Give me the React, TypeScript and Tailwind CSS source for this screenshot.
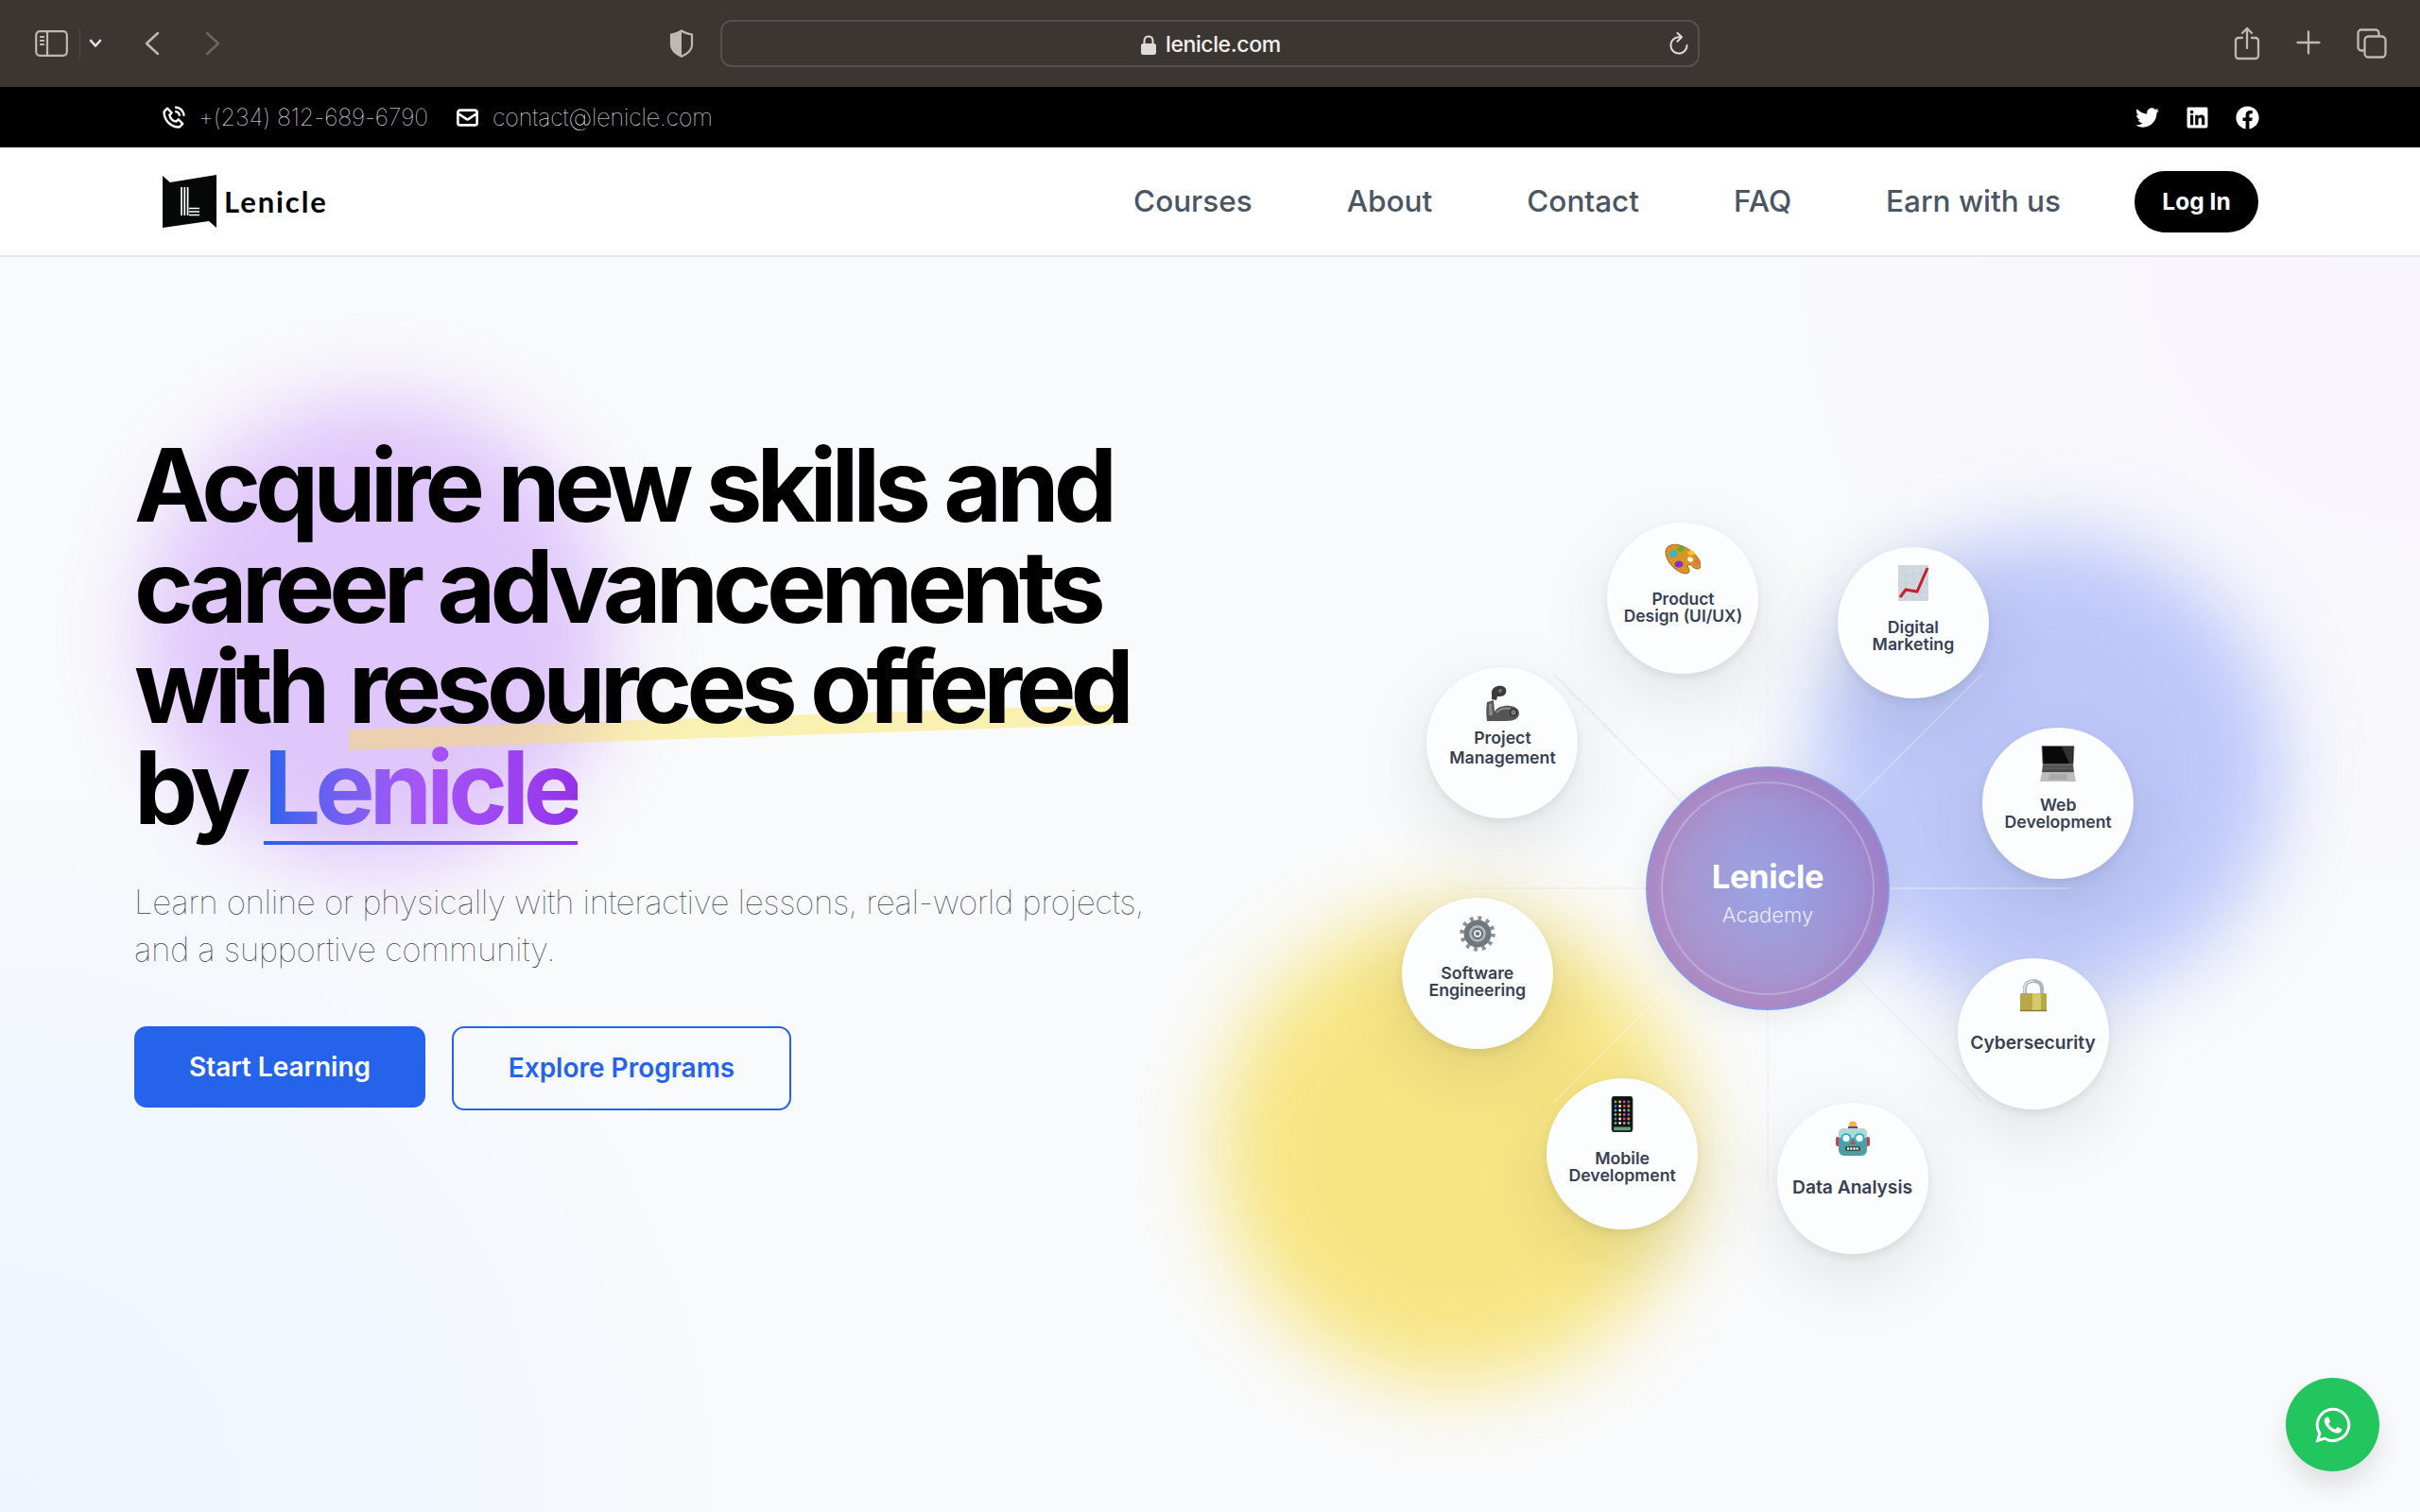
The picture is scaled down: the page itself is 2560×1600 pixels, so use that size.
import type { ReactNode } from "react";
import { BiPhoneCall } from "react-icons/bi";
import { FaFacebook, FaLinkedin, FaTwitter, FaWhatsapp } from "react-icons/fa";
import { HiOutlineMail } from "react-icons/hi";

function Palette() {
  return (
    <svg viewBox="0 0 38 38" className="size-[38px]">
      <path d="M1 12C1 5 10 2 19 6c10 4 18 12 19 19 1 6-5 6-8 3-3-4-7-3-5 1 2 3 1 6-3 6C12 34 1 22 1 12Z" fill="#d99425" stroke="#a5651a" strokeWidth="1" />
      <ellipse cx="27" cy="20" rx="3" ry="2.4" fill="#fff" transform="rotate(25 27 20)" />
      <circle cx="9" cy="14" r="4" fill="#35b5cf" />
      <ellipse cx="17" cy="9" rx="4" ry="2.8" fill="#55b52b" />
      <ellipse cx="28" cy="13" rx="3.6" ry="2.6" fill="#f5c52c" />
      <ellipse cx="34" cy="23" rx="2.6" ry="3.4" fill="#e8743b" />
      <ellipse cx="15" cy="25" rx="4.4" ry="3.6" fill="#8a2cc4" />
    </svg>
  );
}

function Chart() {
  return (
    <svg viewBox="0 0 38 38" className="size-[38px]">
      <rect x="3" y="0" width="32" height="38" fill="#cfd8df" />
      <path d="M3 9.500h32M3 19h32M3 28.500h32M11 0v38M19 0v38M27 0v38" stroke="#c5d0d8" strokeWidth=".8" />
      <path d="M5 34l6-8 12 2L34 3" fill="none" stroke="#c4202f" strokeWidth="3" />
    </svg>
  );
}

function Arm() {
  return (
    <svg viewBox="0 0 38 38" className="size-[38px]">
      <path d="M3 18l7-2 1 12c3-5 10-7 17-6 6 1 9 4 9 8 0 5-5 8-13 8H3c-1-7-1-13 0-20Z" fill="#555" />
      <path d="M8 7c1-5 6-7 11-6 4 1 5 4 4 7-1 4-5 4-9 4l-1 4-5-1V7Z" fill="#3c3c3c" />
      <path d="M5 20l3-1 1 13H5Z" fill="#8a8a8a" />
      <path d="M13 29c4-4 10-5 15-4" fill="none" stroke="#8d8d8d" strokeWidth="2" />
      <circle cx="31" cy="29" r="3.500" fill="#777" stroke="#222" strokeWidth="1.200" />
      <circle cx="17" cy="6" r="2" fill="#777" />
    </svg>
  );
}

function Gear() {
  return (
    <svg viewBox="0 0 38 38" className="size-[38px]">
      <circle cx="19" cy="19" r="16.500" fill="none" stroke="#8b9197" strokeWidth="4.500" strokeDasharray="3.700 4.940" />
      <circle cx="19" cy="19" r="11.500" fill="none" stroke="#71777e" strokeWidth="6" />
      <circle cx="19" cy="19" r="8" fill="#a4abb1" />
      <circle cx="19" cy="19" r="5" fill="#e4e8ea" stroke="#646a71" strokeWidth="1.800" />
      <circle cx="19" cy="19" r="2" fill="#656b72" />
    </svg>
  );
}

function Laptop() {
  return (
    <svg viewBox="0 0 38 38" className="size-[38px]">
      <path d="M2 .500h34l-1 19H3Z" fill="#0a0a0b" stroke="#777" strokeWidth=".8" />
      <path d="M23 1h12l-1 18h-3Z" fill="#333" />
      <path d="M3 19.500h32l1 9H2Z" fill="#4b4b4b" />
      <path d="M3 21h32M3 24h32" stroke="#777" strokeWidth=".8" />
      <path d="M2 28.500h34l2 9.500H0Z" fill="#bdbdbd" />
      <path d="M10 30h18l1 6H9Z" fill="#a8a8a8" />
    </svg>
  );
}

function Padlock() {
  return (
    <svg viewBox="0 0 38 38" className="size-[38px]">
      <path d="M10 20v-7c0-5 4-8 9-8s9 3 9 8v7" fill="none" stroke="#a9b5c0" strokeWidth="4" />
      <path d="M9.500 18v-5c0-5 4-8 9.500-8" fill="none" stroke="#dde6ed" strokeWidth="1.500" />
      <rect x="5" y="18" width="28" height="19" rx="1.500" fill="#b9a844" />
      <rect x="18" y="18" width="9" height="19" fill="#d6c86c" />
      <path d="M5 36.500h28" stroke="#8f7d2b" strokeWidth="1.500" />
    </svg>
  );
}

const appColors = ["#5ac85a", "#f0f0f0", "#d98ca0", "#6b7280", "#3fb6e8", "#eec643", "#e04b4b", "#43c08a", "#3f7fe8", "#f5f5f5", "#b44fd8", "#ef8f35"];

function Phone() {
  return (
    <svg viewBox="0 0 38 38" className="size-[38px]">
      <rect x="8" y="0" width="22" height="38" rx="3" fill="#111" stroke="#444" strokeWidth=".8" />
      {Array.from({ length: 24 }, (_, i) => (
        <circle key={i} cx={12 + (i % 4) * 4.6} cy={6 + Math.floor(i / 4) * 4.5} r="1.400" fill={appColors[(i * 5) % 12]} />
      ))}
      <rect x="10" y="32.500" width="18" height="3.800" rx="1" fill="#5fa17c" />
    </svg>
  );
}

function Robot() {
  return (
    <svg viewBox="0 0 38 38" className="size-[38px]">
      <circle cx="19" cy="4.500" r="4" fill="#f2b632" />
      <path d="M14 8h10v-2H14Z" fill="#5a4a9c" />
      <rect x="1" y="17" width="5" height="10" rx="2" fill="#c8414b" />
      <rect x="32" y="17" width="5" height="10" rx="2" fill="#c8414b" />
      <rect x="4" y="8" width="30" height="29" rx="6" fill="#4e9da0" />
      <path d="M4 15c0-5 2-7 6-7h18c4 0 6 2 6 7v3H4Z" fill="#b2d8d3" />
      <circle cx="12" cy="18.500" r="4.600" fill="#fff" stroke="#2fb2c8" strokeWidth="2" />
      <circle cx="26" cy="18.500" r="4.600" fill="#fff" stroke="#2fb2c8" strokeWidth="2" />
      <path d="M19 19l3 6h-6Z" fill="#d4434e" />
      <rect x="11" y="27" width="16" height="5" rx="2" fill="#274c52" />
      <path d="M13 29.500h12" stroke="#f3ead0" strokeWidth="2.600" strokeDasharray="2.200 1" />
    </svg>
  );
}

type Program = { lines: string[]; icon: ReactNode; label: string };

// clockwise, first one sits just above three o'clock
const programs: Program[] = [
  { lines: ["Web", "Development"], icon: <Laptop />, label: "mt-[16px] text-[17.700px] leading-[18px]" },
  { lines: ["Cybersecurity"], icon: <Padlock />, label: "mt-[22px] text-[19.200px] leading-[20px]" },
  { lines: ["Data Analysis"], icon: <Robot />, label: "mt-[22px] text-[19.200px] leading-[20px]" },
  { lines: ["Mobile", "Development"], icon: <Phone />, label: "mt-[19px] text-[17.700px] leading-[18px]" },
  { lines: ["Software", "Engineering"], icon: <Gear />, label: "mt-[14px] text-[17.700px] leading-[18px]" },
  { lines: ["Project", "Management"], icon: <Arm />, label: "mt-[7px] text-[17.700px] leading-[21px]" },
  { lines: ["Product", "Design (UI/UX)"], icon: <Palette />, label: "mt-[15px] text-[17.400px] leading-[18px]" },
  { lines: ["Digital", "Marketing"], icon: <Chart />, label: "mt-[19px] text-[17.700px] leading-[18px]" },
];

// spokes start at three o'clock and go round in steps of 45 degrees
const spokes = [
  { color: "#ffffff", opacity: 0.3 },
  { color: "#dfe2e7", opacity: 0.3 },
  { color: "#dfe2e7", opacity: 0.25 },
  { color: "#ffffff", opacity: 0.22 },
  { color: "#dfe2e7", opacity: 0.3 },
  { color: "#dfe2e7", opacity: 0.5 },
  { color: "#dfe2e7", opacity: 0.08 },
  { color: "#ffffff", opacity: 0.25 },
];

const links = ["Courses", "About", "Contact", "FAQ", "Earn with us"];

function BrowserBar() {
  return (
    <div className="flex h-[92px] shrink-0 items-center bg-[#3c3633] text-[#bdb8b4]">
      <div className="flex w-[762px] items-center pl-[37px]">
        <svg viewBox="0 0 35 28" className="h-[28px] w-[35px]" fill="none" stroke="currentColor" strokeWidth="2.200">
          <rect x="1.200" y="1.200" width="32.600" height="25.600" rx="4" />
          <path d="M13 1v26" />
          <path d="M5 7h5M5 11h5M5 15h5" strokeWidth="1.800" />
        </svg>
        <div className="ml-[12px] h-[32px] w-px bg-[#4f4946]" />
        <svg viewBox="0 0 14 10" className="ml-[9px] h-[10px] w-[14px]" fill="none" stroke="#e6e3e1" strokeWidth="2.600" strokeLinecap="round" strokeLinejoin="round">
          <path d="M2 2l5 5.500L12 2" />
        </svg>
        <svg viewBox="0 0 16 26" className="ml-[45px] h-[26px] w-[16px]" fill="none" stroke="currentColor" strokeWidth="2.500" strokeLinecap="round" strokeLinejoin="round">
          <path d="M14 2L2 13l12 11" />
        </svg>
        <svg viewBox="0 0 16 26" className="ml-[48px] h-[26px] w-[16px]" fill="none" stroke="#6b6562" strokeWidth="2.500" strokeLinecap="round" strokeLinejoin="round">
          <path d="M2 2l12 11L2 24" />
        </svg>
        <svg viewBox="0 0 26 30" className="ml-[475px] h-[30px] w-[26px]">
          <path d="M13 1.500c3 2.200 6.500 3.300 11 4v11c0 6-5 9.500-11 12.300C7 26 2 22.500 2 16.500v-11c4.500-.7 8-1.800 11-4Z" fill="none" stroke="currentColor" strokeWidth="2.200" strokeLinejoin="round" />
          <path d="M13 1.500v27.300C7 26 2 22.500 2 16.500v-11c4.500-.7 8-1.800 11-4Z" fill="currentColor" />
        </svg>
      </div>
      <div className="flex h-[50px] w-[1036px] items-center justify-between rounded-[12px] border-2 border-[#55504d] pl-[443px] pr-[10px]">
        <div className="flex items-center gap-[10px] pt-[2px] text-[23px] font-medium tracking-[-0.4px] text-[#f3f1f0]">
          <svg viewBox="0 0 16 21" className="h-[21px] w-[16px]">
            <rect x="0" y="9" width="16" height="12" rx="2.500" fill="#dedbd9" />
            <path d="M3.500 10V6.500C3.500 3.500 5.300 1.500 8 1.500s4.500 2 4.500 5V10" fill="none" stroke="#dedbd9" strokeWidth="2" />
          </svg>
          <span>lenicle.com</span>
        </div>
        <svg viewBox="0 0 20 24" className="h-[24px] w-[20px]" fill="none" stroke="#dedbd9" strokeWidth="2" strokeLinecap="round" strokeLinejoin="round">
          <path d="M12 5.300H10A8.600 8.600 0 1 0 18.600 14" />
          <path d="M8.500 1L13 5.300 8.500 9.700" />
        </svg>
      </div>
      <div className="flex items-start">
        <svg viewBox="0 0 28 36" className="ml-[565px] h-[36px] w-[28px]" fill="none" stroke="currentColor" strokeWidth="2.300" strokeLinecap="round" strokeLinejoin="round">
          <path d="M9 12H5a3 3 0 0 0-3 3v16a3 3 0 0 0 3 3h18a3 3 0 0 0 3-3V15a3 3 0 0 0-3-3h-4M14 23V2M9 7l5-5 5 5" />
        </svg>
        <svg viewBox="0 0 26 26" className="ml-[38px] mt-[4px] h-[26px] w-[26px]" fill="none" stroke="currentColor" strokeWidth="2.300" strokeLinecap="round">
          <path d="M13 1.500v23M1.500 13h23" />
        </svg>
        <svg viewBox="0 0 32 32" className="ml-[38px] mt-[2px] h-[32px] w-[32px]" fill="none" stroke="currentColor" strokeWidth="2.300" strokeLinejoin="round">
          <rect x="8.500" y="8.500" width="22" height="22" rx="4" />
          <path d="M8.500 23.500H5a3.500 3.500 0 0 1-3.500-3.500V5A3.500 3.500 0 0 1 5 1.500h15A3.500 3.500 0 0 1 23.500 5v3.500" />
        </svg>
      </div>
    </div>
  );
}

function ContactBar() {
  return (
    <div className="flex h-[64px] shrink-0 items-center justify-between bg-black pl-[170px] pr-[170px] text-white">
      <div className="flex items-center text-[25px] font-thin leading-none tracking-[-0.1px]">
        <BiPhoneCall size={28} />
        <span className="ml-[12px] w-[242px] whitespace-nowrap">+(234) 812-689-6790</span>
        <HiOutlineMail size={27} className="ml-[29px] stroke-[2.3]" />
        <span className="ml-[13px] whitespace-nowrap">contact@lenicle.com</span>
      </div>
      <div className="flex items-center gap-[28px]">
        <FaTwitter size={25} />
        <FaLinkedin size={25} />
        <FaFacebook size={25} />
      </div>
    </div>
  );
}

function Header() {
  return (
    <header className="flex h-[116px] shrink-0 items-center justify-between border-b-2 border-[#e5e7eb] bg-white pl-[172px] pr-[171px]">
      <div className="flex items-center gap-[8px]">
        <svg viewBox="0 0 57 56" className="h-[56px] w-[57px]">
          <path d="M0 1l8 7L57 0v56l-8-7-49 7Z" fill="#060807" />
          <path d="M20 13v30M23.300 13v30M26.600 13v30M28 35.500h11M28 39h11M28 42.500h11" stroke="#fff" strokeWidth="1.700" />
        </svg>
        <span className="font-['Lato'] text-[31px] font-bold tracking-[1.9px] text-black">Lenicle</span>
      </div>
      <div className="flex items-center">
        <nav className="flex gap-[100px] text-[31.500px] text-[#4b5563]">
          {links.map(link => (
            <a key={link} className="whitespace-nowrap font-medium">{link}</a>
          ))}
        </nav>
        <button className="ml-[78px] h-[65px] w-[131px] rounded-full bg-black text-[24.500px] font-bold text-white">Log In</button>
      </div>
    </header>
  );
}

function SkillWheel() {
  return (
    <div className="relative size-[800px]">
      <svg viewBox="-400 -400 800 800" className="absolute inset-0 size-full">
        {spokes.map((s, i) => (
          <line key={i} x1="129" y1="0" x2="320" y2="0" transform={`rotate(${i * 45})`} stroke={s.color} strokeOpacity={s.opacity} strokeWidth="2" />
        ))}
      </svg>
      <div className="absolute left-[271px] top-[271px] flex size-[258px] flex-col items-center rounded-full border-2 border-[#8797e2] bg-[radial-gradient(circle_at_center,#98a4e6_0%,#a496d3_50%,#aa85c3_72%)] pt-[95px] text-white shadow-[0_8px_30px_rgba(0,0,0,0.07)]">
        <div className="absolute inset-0 rounded-full bg-[linear-gradient(65deg,rgba(200,150,180,0.18),rgba(200,150,180,0)_50%,rgba(90,90,215,0.2))]" />
        <div className="absolute inset-[14px] rounded-full border-2 border-white/25" />
        <div className="relative text-[34.500px] font-bold leading-[40px] tracking-[-0.4px]">Lenicle</div>
        <div className="relative mt-[7px] text-[22px] font-light leading-[26px] text-white/80">Academy</div>
      </div>
      {programs.map((p, i) => {
        const angle = ((i * 45 - 16.25) * Math.PI) / 180;
        return (
          <div
            key={p.lines.join(" ")}
            className="absolute flex size-[160px] flex-col items-center rounded-full bg-[#fcfdfe] pt-[19px] shadow-[0_4px_10px_rgba(0,0,0,0.07),0_24px_80px_rgba(0,0,0,0.1)]"
            style={{ left: 320 + Math.cos(angle) * 320, top: 320 + Math.sin(angle) * 320 }}
          >
            {p.icon}
            <div className={`text-center font-semibold text-[#374151] ${p.label}`}>
              {p.lines.map(line => (
                <div key={line} className="whitespace-nowrap">{line}</div>
              ))}
            </div>
          </div>
        );
      })}
    </div>
  );
}

function Hero() {
  return (
    <main className="relative flex flex-1 overflow-hidden bg-[#f9fafb] bg-[radial-gradient(circle_at_0%_100%,#eff5ff_0%,#f1f6ff_14%,rgba(249,250,251,0)_29%),radial-gradient(circle_at_100%_0%,#f7f4fc_0%,rgba(249,250,251,0)_26%)] pl-[142px]">
      {/* blurred blobs */}
      <div className="absolute left-[149px] top-[149px] size-[500px] rounded-full bg-[#d5b1fb] opacity-70 blur-[42px]" />
      <div className="absolute left-[1288px] top-[693px] size-[500px] rounded-full bg-[#f7dd52] opacity-70 blur-[42px]" />
      <div className="absolute left-[1914px] top-[293px] size-[500px] rounded-full bg-[#a5b4fa] opacity-70 blur-[42px]" />

      <div className="relative w-[1100px] shrink-0 pt-[189px]">
        <h1 className="whitespace-nowrap text-[106.670px] font-bold leading-[106.670px] tracking-[-0.056em] text-black">
          Acquire new skills and
          <br />
          career advancements
          <br />
          with{" "}
          <span className="relative ml-[6px] inline-block">
            <svg viewBox="0 0 827 50" preserveAspectRatio="none" className="absolute bottom-[-14px] left-0 h-[50px] w-full">
              <path d="M0 27L827 0v21L0 49Z" fill="#fde047" fillOpacity=".4" />
            </svg>
            <span className="relative">resources offered</span>
          </span>
          <br />
          by{" "}
          <span className="relative inline-block">
            <span className="bg-linear-to-r from-[#2563eb] via-[#a855f7] to-[#9333ea] bg-clip-text text-transparent">Lenicle</span>
            <span className="absolute bottom-[-6px] left-0 h-[4px] w-full bg-linear-to-r from-[#2563eb] to-[#9333ea]" />
          </span>
        </h1>
        <p className="mt-[41px] whitespace-nowrap text-[35px] font-thin leading-[50px] tracking-[-0.41px] text-[#374151]">
          Learn online or physically with interactive lessons, real-world projects,
          <br />
          and a supportive community.
        </p>
        <div className="mt-[57px] flex items-start gap-[28px] text-[28px] font-semibold">
          <button className="h-[86px] w-[308px] rounded-[13px] bg-[#2563eb] text-white">Start Learning</button>
          <button className="h-[89px] w-[359px] rounded-[13px] border-2 border-[#2563eb] text-[#2563eb]">Explore Programs</button>
        </div>
      </div>

      <div className="ml-[228px] mt-[268px]">
        <SkillWheel />
      </div>
    </main>
  );
}

export default function App() {
  return (
    <div className="relative flex h-[1600px] w-[2560px] flex-col overflow-hidden font-['Inter',sans-serif]">
      <BrowserBar />
      <ContactBar />
      <Header />
      <Hero />
      <a className="absolute bottom-[43px] right-[43px] flex size-[99px] items-center justify-center rounded-full bg-[#22c55e] text-white shadow-[0_16px_26px_rgba(0,0,0,0.1)]">
        <FaWhatsapp size={42} />
      </a>
    </div>
  );
}
